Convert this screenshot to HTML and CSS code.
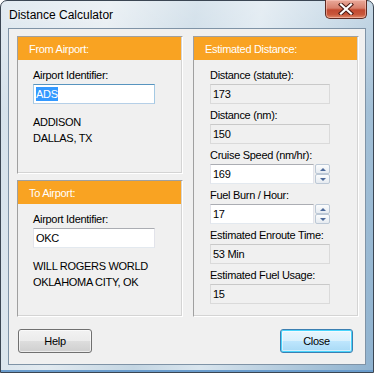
FILE: index.html
```html
<!DOCTYPE html>
<html lang="en">
<head>
    <meta charset="UTF-8">
    <meta name="viewport" content="width=device-width, initial-scale=1.0">
    <title>Distance Calculator</title>
    <link rel="stylesheet" href="styles.css">
</head>
<body>
    <div class="window">
        <div class="titlebar">
            <span class="title">Distance Calculator</span>
            <button class="close-x" aria-label="Close">
                <svg width="16" height="12" viewBox="0 0 16 12">
                    <path d="M3 1.5 L13 10.5 M13 1.5 L3 10.5" stroke="#4a1a14" stroke-width="4.2" stroke-linecap="square"/>
                    <path d="M3 1.5 L13 10.5 M13 1.5 L3 10.5" stroke="#fff" stroke-width="2.2" stroke-linecap="square"/>
                </svg>
            </button>
        </div>

        <div class="client">
            <div class="panels">
                <div class="left-col">
                    <div class="panel panel-from">
                        <div class="panel-head">From Airport:</div>
                        <div class="panel-body">
                            <label class="field-label">Airport Identifier:</label>
                            <div class="edit edit-focus"><span class="selected">ADS</span></div>
                            <div class="address">
                                <div>ADDISON</div>
                                <div>DALLAS, TX</div>
                            </div>
                        </div>
                    </div>

                    <div class="panel panel-to">
                        <div class="panel-head">To Airport:</div>
                        <div class="panel-body">
                            <label class="field-label">Airport Identifier:</label>
                            <div class="edit">OKC</div>
                            <div class="address">
                                <div>WILL ROGERS WORLD</div>
                                <div>OKLAHOMA CITY, OK</div>
                            </div>
                        </div>
                    </div>
                </div>

                <div class="panel panel-est">
                    <div class="panel-head">Estimated Distance:</div>
                    <div class="panel-body body-right">
                        <div class="group">
                            <label class="field-label">Distance (statute):</label>
                            <div class="readonly">173</div>
                        </div>
                        <div class="group">
                            <label class="field-label">Distance (nm):</label>
                            <div class="readonly">150</div>
                        </div>
                        <div class="group">
                            <label class="field-label">Cruise Speed (nm/hr):</label>
                            <div class="spin-row">
                                <div class="edit spin-edit">169</div>
                                <div class="spinner">
                                    <span class="spin-btn"><span class="arrow-up"></span></span>
                                    <span class="spin-btn"><span class="arrow-down"></span></span>
                                </div>
                            </div>
                        </div>
                        <div class="group">
                            <label class="field-label">Fuel Burn / Hour:</label>
                            <div class="spin-row">
                                <div class="edit spin-edit">17</div>
                                <div class="spinner">
                                    <span class="spin-btn"><span class="arrow-up"></span></span>
                                    <span class="spin-btn"><span class="arrow-down"></span></span>
                                </div>
                            </div>
                        </div>
                        <div class="group">
                            <label class="field-label">Estimated Enroute Time:</label>
                            <div class="readonly">53 Min</div>
                        </div>
                        <div class="group">
                            <label class="field-label">Estimated Fuel Usage:</label>
                            <div class="readonly">15</div>
                        </div>
                    </div>
                </div>
            </div>

            <div class="button-row">
                <button class="btn btn-help">Help</button>
                <button class="btn btn-default">Close</button>
            </div>
        </div>
    </div>
</body>
</html>
```

FILE: styles.css
```css
* {
    box-sizing: border-box;
}

body {
    margin: 0;
    padding: 0;
    background-color: #ffffff;
    font-family: "Liberation Sans", Arial, sans-serif;
}

.window {
    width: 374px;
    height: 373px;
    padding: 0 7px 7px 7px;
    border: 1px solid #3b4653;
    border-radius: 7px 7px 0 0;
    background:
        linear-gradient(180deg, rgba(255, 255, 255, 0.35) 0%, rgba(255, 255, 255, 0) 30%),
        linear-gradient(100deg, #d3e0ea 0%, #e2eaf0 25%, #c4d6e3 45%, #d9e5ee 60%, #a9c4d9 85%, #8fb2cf 100%);
    box-shadow: inset 0 -2px 0 #6a9ccc;
    display: flex;
    flex-direction: column;
}

.titlebar {
    height: 27px;
    display: flex;
    justify-content: space-between;
    align-items: flex-start;
}

.title {
    font-size: 12px;
    color: #000;
    margin-top: 7px;
    margin-left: 1px;
    text-shadow: 0 0 6px rgba(255, 255, 255, 0.9);
}

.close-x {
    width: 42px;
    height: 19px;
    margin-top: -1px;
    margin-right: -1px;
    padding: 0;
    border: 1px solid #5d2a22;
    border-top: none;
    border-radius: 0 0 5px 5px;
    background: linear-gradient(180deg, #e9a99a 0%, #d8806c 45%, #c24a31 55%, #c8563a 80%, #e08a6a 100%);
    box-shadow: inset 0 0 0 1px rgba(255, 210, 200, 0.5);
    display: flex;
    align-items: center;
    justify-content: center;
}

.client {
    flex: 1;
    background-color: #f0f0f0;
    border: 1px solid #7f93a6;
    padding: 7px 8px 0 8px;
    display: flex;
    flex-direction: column;
    font-size: 11px;
    letter-spacing: -0.3px;
    color: #000;
}

.panels {
    display: grid;
    grid-template-columns: 166px 166px;
    column-gap: 10px;
    height: 281px;
}

.left-col {
    display: flex;
    flex-direction: column;
    gap: 6px;
}

.panel {
    border: 1px solid #a0a0a0;
    border-right-color: #ffffff;
    border-bottom-color: #ffffff;
    box-shadow: inset -1px -1px 0 #d4d4d4;
}

.panel-from {
    height: 138px;
}

.panel-to {
    flex: 1;
}

.panel-head {
    height: 23px;
    background-color: #f9a322;
    color: #ffffff;
    padding-left: 11px;
    line-height: 24px;
    margin-right: 1px;
}

.panel-body {
    padding: 8px 0 0 15px;
}

.body-right {
    padding-left: 16px;
}

.field-label {
    display: block;
    height: 14px;
    line-height: 14px;
    margin-bottom: 2px;
}

.edit {
    width: 122px;
    height: 20px;
    background-color: #ffffff;
    border: 1px solid #e2e3ea;
    border-top-color: #abadb3;
    border-bottom-color: #e3e9ef;
    line-height: 18px;
    padding-left: 2px;
}

.edit-focus {
    border-color: #a4c9e3;
    border-top-color: #5794bf;
    border-bottom-color: #b5cfe7;
}

.selected {
    background-color: #3399ff;
    color: #ffffff;
    padding: 1px 0;
}

.address {
    margin-top: 10px;
    line-height: 16px;
}

.group {
    margin-bottom: 4px;
}

.readonly {
    width: 120px;
    height: 20px;
    border: 1px solid #dadada;
    border-top-color: #c9c9c9;
    line-height: 18px;
    padding-left: 2px;
}

.spin-row {
    display: flex;
    gap: 1px;
}

.spin-edit {
    width: 104px;
}

.spinner {
    width: 15px;
    height: 20px;
    display: flex;
    flex-direction: column;
    justify-content: space-between;
}

.spin-btn {
    height: 10px;
    border: 1px solid #bcc8d6;
    border-radius: 2px;
    background: linear-gradient(180deg, #fbfcfd 0%, #e6ebf1 100%);
    display: flex;
    align-items: center;
    justify-content: center;
}

.arrow-up {
    width: 0;
    height: 0;
    border-left: 3px solid transparent;
    border-right: 3px solid transparent;
    border-bottom: 3px solid #4d6a9a;
}

.arrow-down {
    width: 0;
    height: 0;
    border-left: 3px solid transparent;
    border-right: 3px solid transparent;
    border-top: 3px solid #4d6a9a;
}

.button-row {
    display: flex;
    justify-content: space-between;
    margin-top: 12px;
    padding: 0 4px 0 1px;
}

.btn {
    height: 24px;
    font-family: "Liberation Sans", Arial, sans-serif;
    font-size: 11px;
    letter-spacing: -0.3px;
    color: #000;
    border: 1px solid #707070;
    border-radius: 3px;
    background: linear-gradient(180deg, #f2f2f2 0%, #ebebeb 50%, #dddddd 51%, #cfcfcf 100%);
    box-shadow: inset 0 0 0 1px rgba(255, 255, 255, 0.6);
    padding: 0;
}

.btn-help {
    width: 74px;
}

.btn-default {
    width: 73px;
    border-color: #3c7fb1;
    background: linear-gradient(180deg, #eaf6fd 0%, #d9f0fc 50%, #bee6fd 51%, #a7d9f5 100%);
    box-shadow: inset 0 0 0 1px #48d4fc, inset 0 0 0 2px rgba(255, 255, 255, 0.5);
}
```
